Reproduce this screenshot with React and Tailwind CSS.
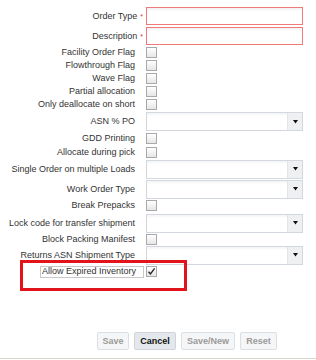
import React from 'react';

// Row definitions: kind = input | check | select, h = row height in px
const rows = [
  { label: 'Order Type', kind: 'input', required: true, h: 'h-[20px]' },
  { label: 'Description', kind: 'input', required: true, h: 'h-[20px]' },
  { label: 'Facility Order Flag', kind: 'check', h: 'h-[13px]' },
  { label: 'Flowthrough Flag', kind: 'check', h: 'h-[13px]' },
  { label: 'Wave Flag', kind: 'check', h: 'h-[13px]' },
  { label: 'Partial allocation', kind: 'check', h: 'h-[13px]' },
  { label: 'Only deallocate on short', kind: 'check', h: 'h-[13px]' },
  { label: 'ASN % PO', kind: 'select', h: 'h-[21px]' },
  { label: 'GDD Printing', kind: 'check', h: 'h-[13px]' },
  { label: 'Allocate during pick', kind: 'check', h: 'h-[14px]' },
  { label: 'Single Order on multiple Loads', kind: 'select', h: 'h-[20px]' },
  { label: 'Work Order Type', kind: 'select', h: 'h-[20px]' },
  { label: 'Break Prepacks', kind: 'check', h: 'h-[13px]' },
  { label: 'Lock code for transfer shipment', kind: 'select', h: 'h-[22px]' },
  { label: 'Block Packing Manifest', kind: 'check', h: 'h-[11px]' },
  { label: 'Returns ASN Shipment Type', kind: 'select', h: 'h-[20px]' },
];

function Checkbox({ checked }) {
  return (
    <div className="w-[11px] h-[11px] border border-[#a9a9a9] bg-gradient-to-b from-[#ffffff] to-[#e6e6e6] flex items-center justify-center">
      {checked && (
        <svg width="9" height="9" viewBox="0 0 9 9">
          <path d="M1.5 4.8 L3.5 7 L7.6 1.4" fill="none" stroke="#222" strokeWidth="1.3" />
        </svg>
      )}
    </div>
  );
}

function Field({ kind }) {
  if (kind === 'input') {
    return (
      <div className="w-[157px] h-[18px] border border-[#f07a7a] bg-white shadow-[inset_0_2px_2px_rgba(0,0,0,0.05)]" />
    );
  }
  if (kind === 'select') {
    return (
      <div className="w-[157px] h-[19px] border border-[#d3d8de] bg-white flex shadow-[inset_0_2px_2px_rgba(0,0,0,0.04)]">
        <div className="flex-1" />
        <div className="w-[15px] h-full bg-[#eef0f2] border-l border-[#e2e5e8] flex items-center justify-center">
          <svg width="5" height="4" viewBox="0 0 5 4">
            <path d="M0 0 H5 L2.5 3.5 Z" fill="#111" />
          </svg>
        </div>
      </div>
    );
  }
  return <Checkbox />;
}

function FormRow({ label, kind, required, h }) {
  return (
    <div className={`flex items-center ${h}`}>
      <div className={`w-[146px] flex justify-end items-center ${required ? 'pr-[3px]' : 'pr-[11px]'}`}>
        <span className="whitespace-nowrap">{label}</span>
        {required && <span className="ml-[3px] text-[#e53030] text-[7px] leading-none">*</span>}
      </div>
      <Field kind={kind} />
    </div>
  );
}

function Button({ children, primary, w }) {
  return (
    <button
      className={`h-[18px] ${w} border rounded-[2px] font-bold text-[9px] ${
        primary
          ? 'bg-[#e4e8ec] border-[#cfd4d9] text-[#111]'
          : 'bg-[#f5f6f7] border-[#dcdfe2] text-[#9a9a9a]'
      }`}
    >
      {children}
    </button>
  );
}

export default function App() {
  return (
    <div className="relative w-[316px] h-[360px] bg-white text-[#333] text-[9px] leading-none font-['Liberation_Sans',Arial,sans-serif] overflow-hidden">
      <div className="flex flex-col pt-[6px]">
        {rows.map((r) => (
          <FormRow key={r.label} {...r} />
        ))}
        <div className="flex items-center h-[13px]">
          <div className="w-[146px] flex justify-end pr-[2px]">
            <div className="w-[104px] h-[12px] border border-[#c8c8c8] flex items-center px-[1px] whitespace-nowrap">
              Allow Expired Inventory
            </div>
          </div>
          <Checkbox checked />
        </div>
      </div>

      {/* annotation highlight */}
      <div className="absolute left-[20px] top-[260px] w-[167px] h-[31px] border-[3px] border-[#e3131b]" />

      <div className="absolute left-[97px] top-[332px] flex gap-[5px]">
        <Button w="w-[32px]">Save</Button>
        <Button primary w="w-[42px]">Cancel</Button>
        <Button w="w-[54px]">Save/New</Button>
        <Button w="w-[37px]">Reset</Button>
      </div>

      <div className="absolute left-0 right-0 top-[358px] h-[1px] bg-[#d9d6cf]" />
    </div>
  );
}
